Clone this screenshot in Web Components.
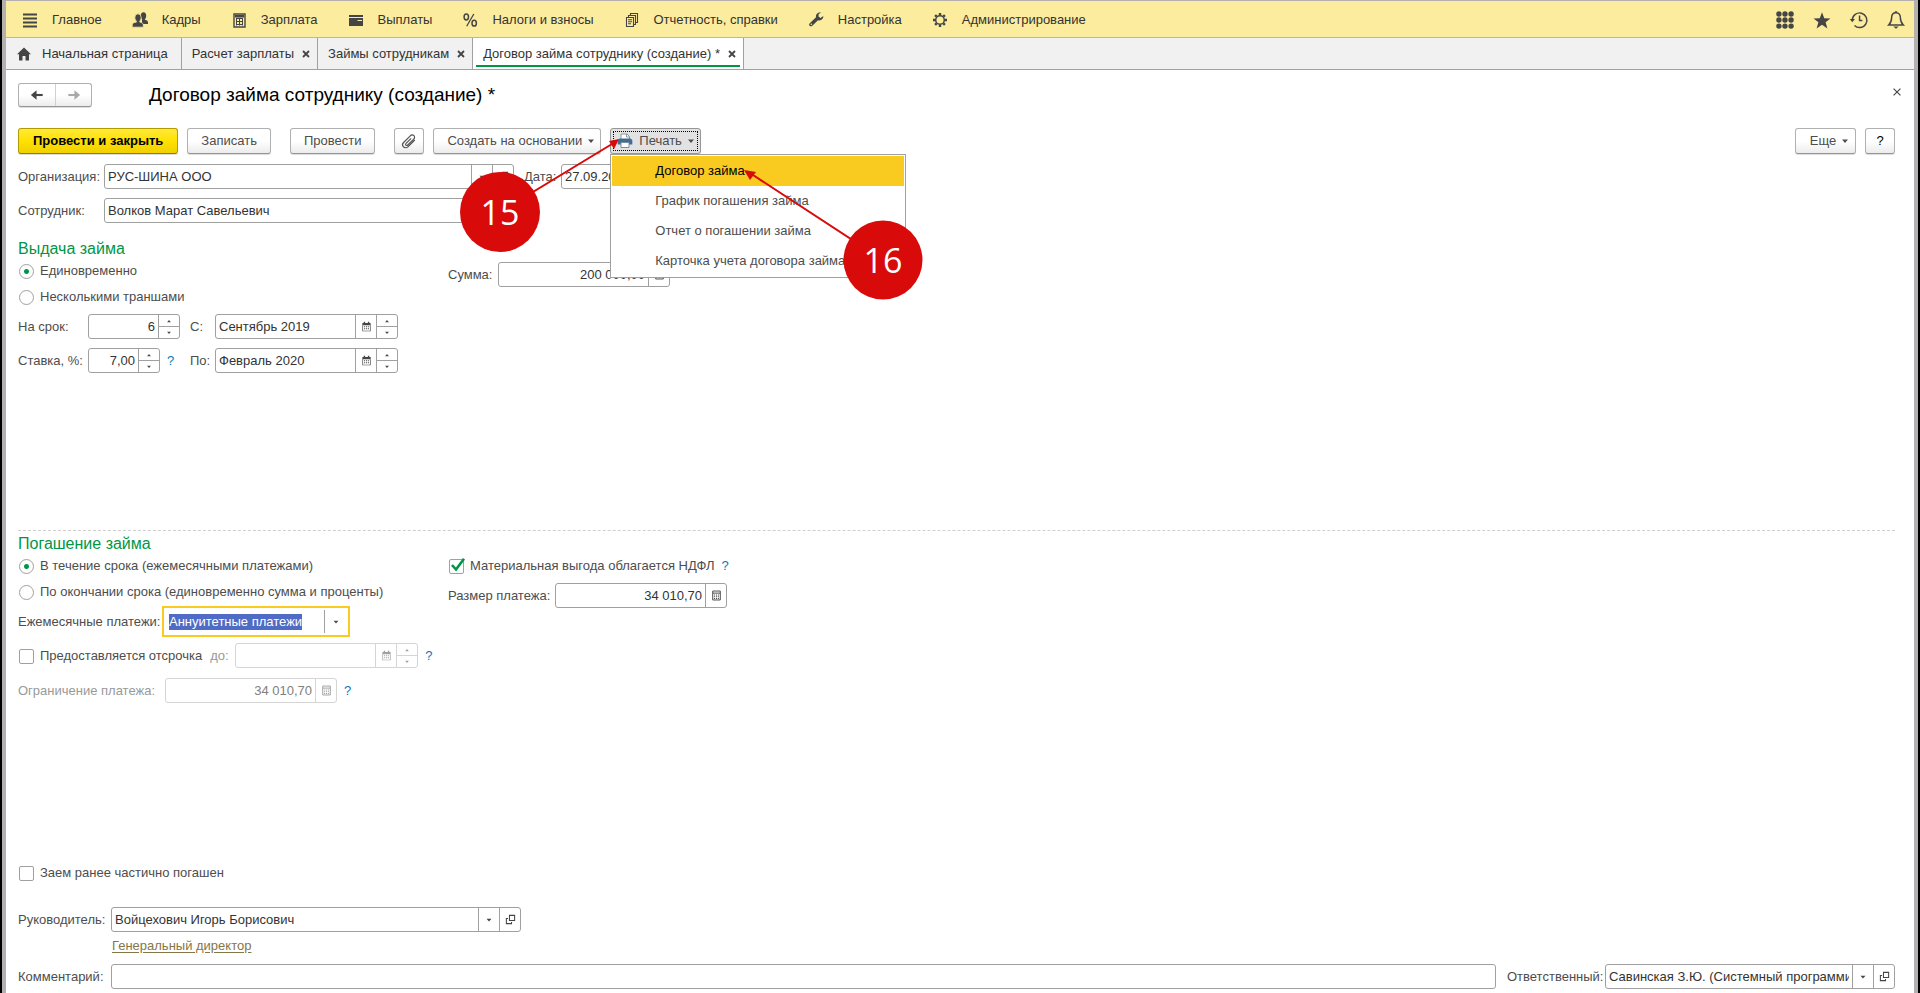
<!DOCTYPE html>
<html lang="ru">
<head>
<meta charset="utf-8">
<title>Договор займа сотруднику (создание) *</title>
<style>
  html, body { margin: 0; height: 100%; }
  body {
    font: 13px/16px "Liberation Sans", Arial, sans-serif;
    color: #4d4d4d;
    background: #fff;
  }
</style>
</head>
<body>
<loan-app></loan-app>

<script>
const ICONS = {
  menu: '<path d="M1 2.5h14M1 6.5h14M1 10.5h14M1 14.5h14" stroke="#454545" stroke-width="2" fill="none"/>',
  people: '<g fill="#454545"><ellipse cx="11.500" cy="3.800" rx="2.700" ry="3.500"/><path d="M10 6h3v1.800c2.200.5 3 1.200 3 2.700V12h-6z"/></g><g fill="#454545" stroke="#fbec9e" stroke-width=".8"><path d="M4.600 8h3v2c2.600.7 3.700 1.300 3.700 3v2.200H.2V13c0-1.700 1.100-2.300 4.400-3z"/><ellipse cx="6" cy="5.800" rx="3.200" ry="4"/></g><path d="M5 8.500h2.200V11H5z" fill="#454545"/>',
  calculator: '<path d="M3 2h11v13H3z" fill="none" stroke="#454545" stroke-width="1.400"/><path d="M4 3h9v2.500H4z" fill="#454545"/><path d="M5 6.500h7M5 9.500h7M5 12.500h7M5.500 6v7.500M8.500 6v7.500M11.500 6v7.500" stroke="#454545" stroke-width="1" fill="none"/>',
  wallet: '<path d="M1 3h14v2H1zM1 6h14v8H1z" fill="#454545"/><path d="M9.500 8.500H14" stroke="#fbec9e" stroke-width="1"/>',
  percent: '<g fill="none" stroke="#454545" stroke-width="1.500"><ellipse cx="4.300" cy="5" rx="2.200" ry="2.900"/><ellipse cx="12.200" cy="11.200" rx="2.200" ry="2.900"/><path d="M11.800 2 4.700 14.300" stroke-width="1.300"/></g>',
  report: '<g fill="none" stroke="#454545" stroke-width="1.100"><path d="M2.500 5.500h7v9h-7zM4.500 5V3.500h7v9H10M6.500 3V1.500h7v9H12"/><path d="M4 7.800h4M4 9.800h4M4 11.800h3"/></g>',
  wrench: '<path d="M15.300 4.100 12.600 5.900 10.500 4.400l.2-2.300L13.200.6C10.300 0 7.500 1.700 8 5.200L1.800 11.200c-1.900 1.800.6 4.400 2.500 2.500L10 8.300c3.100.8 5.600-1.300 5.300-4.200zM3.300 13.100a.8.8 0 1 1 0-1.600.8.8 0 0 1 0 1.600z" fill="#454545"/>',
  gear: '<g stroke="#454545" fill="none"><circle cx="8" cy="8" r="4.300" stroke-width="1.500"/><path d="M8 1v2.500M8 12.500V15M1 8h2.500M12.500 8H15M3.100 3.100l1.600 1.600M11.300 11.300l1.600 1.600M12.900 3.100l-1.600 1.600M4.700 11.300l-1.600 1.600" stroke-width="2.400"/></g>',
  home: '<path d="M8 1.500 15 8.200h-2V14.500H9.500V10h-3v4.500H3V8.200H1z" fill="#454545"/>',
  apps: '<g fill="#454545"><circle cx="2.600" cy="2.600" r="2.400"/><circle cx="8" cy="2.600" r="2.400"/><circle cx="13.400" cy="2.600" r="2.400"/><circle cx="2.600" cy="8" r="2.400"/><circle cx="8" cy="8" r="2.400"/><circle cx="13.400" cy="8" r="2.400"/><circle cx="2.600" cy="13.400" r="2.400"/><circle cx="8" cy="13.400" r="2.400"/><circle cx="13.400" cy="13.400" r="2.400"/></g>',
  star: '<path d="M8 1.200 10 6.500l5.500.1-4.300 3.500 1.600 5.400L8 12.300l-4.800 3.200 1.600-5.400L.5 6.600 6 6.500z" fill="#454545"/>',
  history: '<g fill="none" stroke="#454545" stroke-width="1.300"><path d="M2 8a6.500 6.500 0 1 1 2 4.900"/><path d="M8.500 4v4.500H11"/></g><path d="M-.2 7h4.600L2 10z" fill="#454545"/>',
  bell: '<path d="M8 1.500c-2.700 0-3.900 2-3.900 4.500 0 3.400-.8 4.700-2.600 6.500h13c-1.800-1.800-2.600-3.100-2.600-6.500 0-2.500-1.200-4.500-3.900-4.500z" fill="none" stroke="#454545" stroke-width="1.300"/><path d="M5.600 13.700h4.800L8 15.700zM7 .3h2v1.300H7z" fill="#454545"/>',
  back: '<path d="M5 8h9.500" stroke="#454545" stroke-width="2.400"/><path d="M7.500 2.700V13.300L1 8z" fill="#454545"/>',
  forward: '<path d="M1.500 8H11" stroke="#a9a9a9" stroke-width="2.400"/><path d="M8.500 2.700V13.300L15 8z" fill="#a9a9a9"/>',
  cross: '<path d="m4 4 8 8M12 4l-8 8" stroke="#454545" stroke-width="2.400"/>',
  close: '<path d="m2.500 2.500 11 11M13.500 2.500l-11 11" stroke="#444" stroke-width="1.800"/>',
  clip: '<path d="m13.200 6.600-6.600 6.600C5 14.800 2.800 14.600 1.700 13.300c-1.100-1.200-.9-3 .3-4.200l6.700-6.700c1-1 2.600-1.200 3.600-.2s.8 2.500-.2 3.500l-5.900 5.900c-.6.600-1.400.7-1.900.2s-.4-1.300.2-1.900l5-5" transform="translate(.6 .4)" fill="none" stroke="#555" stroke-width="1.200"/>',
  printer: '<path d="M4 6V1h6l2.500 2.500V6" fill="#fff" stroke="#8a98a4"/><path d="M9.500 1v3h3" fill="none" stroke="#8a98a4"/><path d="M2.500 5.500h11L15.300 7v4.500H.7V7z" fill="#3f6d95"/><path d="M4 9.500h8v5H4z" fill="#fff" stroke="#7d8c99"/>',
  calendar: '<g fill="currentColor"><path d="M2 3h12v3H2zM4 1h2v2H4zM10 1h2v2h-2z"/><path d="M2 6h1v8h10V6h1v9H2z"/><path d="M4.500 7.500H6V9H4.500zM7.300 7.500h1.500V9H7.300zM10 7.500h1.500V9H10zM4.500 10.500H6V12H4.500zM7.300 10.500h1.500V12H7.300zM10 10.500h1.500V12H10z"/></g>',
  calc: '<g fill="none" stroke="currentColor" stroke-width="1.400"><path d="M2.500 1.500h11v13h-11zM2.500 4.500h11"/></g><path d="M4.500 6.500H6V8H4.500zM7.300 6.500h1.500V8H7.300zM10 6.500h1.500V8H10zM4.500 9H6v1.500H4.500zM7.300 9h1.500v1.500H7.300zM10 9h1.500v1.500H10zM4.500 11.500H6V13H4.500zM7.300 11.500h1.500V13H7.300zM10 11.500h1.500V13H10z" fill="currentColor"/>',
  open: '<g fill="none" stroke="currentColor" stroke-width="1.500"><path d="M6.500 2h7.500v7.500H6.500z"/><path d="M4.500 6.500H2V14h7.500v-2.500"/></g>',
  drop: '<path d="M4 6h8l-4 4.500z" fill="currentColor"/>',
  up: '<path d="M5 10h6L8 6.500z" fill="currentColor"/>',
  down: '<path d="M5 6h6L8 9.500z" fill="currentColor"/>'
};

let nextId = 0;

class Base extends HTMLElement {
  connectedCallback() {
    if (this.shadowRoot) return;
    const root = this.attachShadow({ mode: 'open' });
    const t = document.createElement('template');
    t.innerHTML = '<style>*{box-sizing:border-box}button{font:inherit;color:inherit;margin:0;padding:0;border:0;background:none}' +
      this.css() + '</style>' + this.html();
    root.append(t.content.cloneNode(true));
  }
  at(name, fallback = '') { return this.getAttribute(name) ?? fallback; }
}

customElements.define('ui-icon', class extends Base {
  css() { return `:host{display:block;flex:none;width:${this.at('size', 16)}px;height:${this.at('size', 16)}px}svg{display:block;overflow:visible}`; }
  html() { return `<svg width="100%" height="100%" viewBox="0 0 16 16" aria-hidden="true">${ICONS[this.at('name')]}</svg>`; }
});

/* Yellow section bar */
customElements.define('nav-item', class extends Base {
  css() { return ':host{display:block}a{display:flex;align-items:center;gap:14px;color:#333;text-decoration:none;white-space:nowrap}'; }
  html() { return `<a href="#"><ui-icon name="${this.at('icon')}"></ui-icon><slot></slot></a>`; }
});

customElements.define('section-bar', class extends Base {
  css() { return `:host{display:flex;align-items:center;justify-content:space-between;height:37px;padding:1px 9px 0 16px;box-sizing:border-box;
      background:#fbec9e;border-bottom:1px solid #cbbb6b}
    nav{display:flex;gap:30px}.tools{display:flex;gap:19px}`; }
  html() { return `<nav>
      <nav-item icon="menu">Главное</nav-item>
      <nav-item icon="people">Кадры</nav-item>
      <nav-item icon="calculator">Зарплата</nav-item>
      <nav-item icon="wallet">Выплаты</nav-item>
      <nav-item icon="percent">Налоги и взносы</nav-item>
      <nav-item icon="report">Отчетность, справки</nav-item>
      <nav-item icon="wrench">Настройка</nav-item>
      <nav-item icon="gear">Администрирование</nav-item>
    </nav>
    <div class="tools">
      <button aria-label="Все функции"><ui-icon name="apps" size="18"></ui-icon></button>
      <button aria-label="Избранное"><ui-icon name="star" size="18"></ui-icon></button>
      <button aria-label="История"><ui-icon name="history" size="18"></ui-icon></button>
      <button aria-label="Оповещения"><ui-icon name="bell" size="18"></ui-icon></button>
    </div>`; }
});

/* Open windows */
customElements.define('window-tab', class extends Base {
  css() { return `:host{display:flex;align-items:center;position:relative;padding:0 5px 0 10px;border-right:1px solid #a0a0a0;color:#333;white-space:nowrap}
    :host([home]){padding-right:13px}
    :host([active]){background:#fff}
    :host([active])::after{content:"";position:absolute;left:3px;right:3px;bottom:2px;height:2px;background:#009646}
    a{display:flex;align-items:center;gap:10px;color:inherit;text-decoration:none}
    button{margin-left:6px}`; }
  html() {
    const home = this.hasAttribute('home');
    return `<a href="#">${home ? '<ui-icon name="home"></ui-icon>' : ''}<slot></slot></a>` +
      (home ? '' : '<button aria-label="Закрыть вкладку"><ui-icon name="cross" size="12"></ui-icon></button>');
  }
});

customElements.define('window-tabs', class extends Base {
  css() { return ':host{display:flex;height:32px;box-sizing:border-box;background:#f1f1f1;border-bottom:1px solid #a0a0a0}'; }
  html() { return `<window-tab home>Начальная страница</window-tab>
    <window-tab>Расчет зарплаты</window-tab>
    <window-tab>Займы сотрудникам</window-tab>
    <window-tab active>Договор займа сотруднику (создание) *</window-tab>`; }
});

/* Command button */
customElements.define('cmd-button', class extends Base {
  css() { return `:host{display:block;flex:none}
    button{display:flex;align-items:center;justify-content:center;height:26px;min-width:30px;padding:0 13px;white-space:nowrap;
      border:1px solid #b0b0b0;border-bottom-color:#969696;border-radius:3px;background:linear-gradient(#fff 50%,#ececec);box-shadow:0 1px 0 #ddd}
    :host([kind=primary]) button{padding:0 14px;font-weight:bold;color:#000;border-color:#b39c00;border-bottom-color:#8f7d00;background:linear-gradient(#ffe93b,#ffe100 50%,#f0d000)}
    :host([kind=icon]) button{padding:0 6px;color:#000}
    :host([menu]) button{min-width:61px;padding-right:3px}
    :host([pressed]) button{padding:0 3px 0 6px;background:#e2e2e2;border-color:#979797;outline:1px dotted #000;outline-offset:-4px}
    :host([pressed]) ui-icon:first-child{margin-right:6px}
    .drop{margin-left:3px}`; }
  html() {
    const icon = this.at('icon');
    return `<button ${this.hasAttribute('menu') ? 'aria-haspopup="menu"' : ''} ${this.at('hint') ? `aria-label="${this.at('hint')}"` : ''}>` +
      (icon ? `<ui-icon name="${icon}"></ui-icon>` : '') + '<slot></slot>' +
      (this.hasAttribute('menu') ? '<ui-icon class="drop" name="drop" size="12"></ui-icon>' : '') + '</button>';
  }
});

customElements.define('print-menu', class extends Base {
  css() { return `:host{display:block;position:relative}
    [role=menu]{position:absolute;z-index:2;top:26px;left:0;width:296px;box-sizing:border-box;padding:1px;background:#fff;border:1px solid #a0a0a0}
    [role=menuitem]{display:block;width:100%;height:30px;padding-left:43px;text-align:left;white-space:nowrap}
    .current{background:#f9cb20;color:#000}`; }
  html() { return `<cmd-button icon="printer" menu pressed>Печать</cmd-button>
    <div role="menu">
      <button role="menuitem" class="current">Договор займа</button>
      <button role="menuitem">График погашения займа</button>
      <button role="menuitem">Отчет о погашении займа</button>
      <button role="menuitem">Карточка учета договора займа</button>
    </div>`; }
});

/* Labelled input with optional trailing buttons */
customElements.define('form-field', class extends Base {
  css() { return `:host{display:flex;align-items:center;height:25px}
    :host([grow]){flex:1}
    :host([disabled]) label{color:#999}
    label{flex:none;width:${this.at('label-width') ? this.at('label-width') + 'px' : 'auto'};white-space:nowrap}
    .box{display:flex;height:25px;flex:${this.hasAttribute('grow') ? '1' : 'none'};width:${this.at('width', 100)}px;
      border:1px solid #a0a0a0;border-radius:3px;background:#fff;color:#454545}
    :host([disabled]) .box{border-color:#d5d5d5;color:#a0a0a0}
    input{flex:1;min-width:0;font:inherit;color:#333;border:0;outline:0;margin:0;padding:0 3px;background:none;text-align:${this.hasAttribute('numeric') ? 'right' : 'left'}}
    :host([disabled]) input{color:#808080}
    .box>button,.spin{flex:none;width:21px;border-left:1px solid #a0a0a0;display:flex;align-items:center;justify-content:center}
    .spin{flex-direction:column}
    .spin button{flex:1;width:100%;display:flex;align-items:center;justify-content:center}
    .spin button+button{border-top:1px solid #a0a0a0}
    :host([disabled]) .box>button,:host([disabled]) .spin,:host([disabled]) .spin button{border-color:#d5d5d5}
    .help{margin-left:7px;color:#0a78c2}`; }
  html() {
    const id = 'f' + (++nextId), off = this.hasAttribute('disabled') ? 'disabled' : '';
    const names = { drop: 'Выбрать из списка', open: 'Открыть', calendar: 'Календарь', calc: 'Калькулятор' };
    const buttons = this.at('buttons').split(' ').filter(Boolean).map(b => b === 'spin'
      ? `<span class="spin"><button aria-label="Больше" ${off}><ui-icon name="up" size="10"></ui-icon></button><button aria-label="Меньше" ${off}><ui-icon name="down" size="10"></ui-icon></button></span>`
      : `<button aria-label="${names[b]}" ${off}><ui-icon name="${b}" size="${b === 'drop' ? 10 : 11}"></ui-icon></button>`).join('');
    return `<label for="${id}">${this.at('label')}</label><span class="box"><input id="${id}" type="text" value="${this.at('value')}" ${off}>${buttons}</span>` +
      (this.hasAttribute('help') ? '<button class="help" aria-label="Справка">?</button>' : '');
  }
});

/* Focused drop-down with its value highlighted */
customElements.define('choice-field', class extends Base {
  css() { return `:host{display:flex;align-items:center;height:31px}
    label{flex:none;width:144px;white-space:nowrap}
    .box{display:flex;align-items:center;width:188px;height:31px;padding:0 2px 0 5px;border:2px solid #f9cb20}
    select{appearance:none;field-sizing:content;font:inherit;height:16px;margin:0 auto 0 0;padding:0;border:0;border-radius:0;outline:0;background:#4f6bc5;color:#fff}
    button{width:22px;height:23px;border-left:1px solid #a0a0a0;display:flex;align-items:center;justify-content:center}`; }
  html() { return `<label for="c">${this.at('label')}</label><span class="box"><select id="c"><option>${this.at('value')}</option></select>
      <button aria-label="Выбрать из списка"><ui-icon name="drop" size="10"></ui-icon></button></span>`; }
});

/* Radio buttons and tick boxes */
customElements.define('check-field', class extends Base {
  css() { return `:host{display:flex;align-items:center;height:26px;padding-left:1px}
    label{display:flex;align-items:center;gap:6px;white-space:nowrap}
    input{appearance:none;flex:none;width:15px;height:15px;margin:0;border:1px solid #a0a0a0;border-radius:2px;background:#fff}
    input[type=radio]{border-radius:50%}
    input[type=radio]:checked{background:radial-gradient(circle,#009646 2px,#fff 3px)}
    .mark{position:relative;display:flex}
    svg{position:absolute;left:1px;top:-1px;overflow:visible;pointer-events:none}
    .help{margin-left:7px;color:#0a78c2}`; }
  html() {
    const on = this.hasAttribute('checked'), type = this.at('type', 'checkbox');
    return `<label><span class="mark"><input type="${type}" ${on ? 'checked' : ''}>` +
      (on && type === 'checkbox' ? '<svg width="15" height="14" viewBox="0 0 15 14"><path d="M2 7l4 4.500L14 .8" fill="none" stroke="#009646" stroke-width="2.600"/></svg>' : '') +
      '</span><slot></slot></label>' + (this.hasAttribute('help') ? '<button class="help" aria-label="Справка">?</button>' : '');
  }
});

/* Numbered callouts drawn over the form */
customElements.define('step-callouts', class extends Base {
  css() { return ':host{position:absolute;z-index:3;left:448px;top:119px;pointer-events:none}svg{display:block}text{font:34px "Open Sans","Noto Sans",sans-serif;fill:#fff;text-anchor:middle}'; }
  html() { return `<svg width="474" height="184" viewBox="454 120 474 184">
      <g stroke="#d90a0a" stroke-width="2"><path d="M500 212 612 144M883 260 753 175"/></g>
      <g fill="#d90a0a"><path d="M619 139 614 149 609 141zM744 170l12 2-6 8z"/>
      <circle cx="500" cy="212" r="40"/><circle cx="883" cy="260" r="39.500"/></g>
      <text x="500" y="225">15</text><text x="883" y="273">16</text></svg>`; }
});

customElements.define('loan-form', class extends Base {
  css() { return `:host{flex:1;display:flex;flex-direction:column;padding:12px 19px 4px 12px}
    header{display:flex;align-items:center;height:26px}
    .history{display:flex;height:24px;border:1px solid #b0b0b0;border-bottom-color:#969696;border-radius:3px;background:linear-gradient(#fff 50%,#ececec);box-shadow:0 1px 0 #ddd}
    .history button{display:flex;align-items:center;justify-content:center;width:36px}
    .history button+button{border-left:1px solid #d0d0d0}
    h1{margin:0 auto 0 57px;font-size:19px;line-height:24px;font-weight:normal;color:#000}
    .close{align-self:flex-start;margin:5px -7px 0 0}
    .toolbar{display:flex;margin-top:20px;gap:9px}
    .wide{margin-left:10px}.end{margin-left:auto}
    .row{display:flex;gap:10px;margin-top:10px}
    .row+.row{margin-top:9px}
    h2{margin:0;font-size:16px;line-height:18px;font-weight:normal;color:#009646}
    .issue{margin-top:17px}
    .columns{display:grid;grid-template-columns:430px 1fr;align-items:start}
    .spacer{flex:1}
    .period{display:grid;grid-template-columns:172px auto;gap:9px 0;justify-content:start;margin-top:4px}
    .repay{border-top:1px dashed #cfcfcf;padding-top:4px}
    .choice{margin-top:1px}
    .delay{display:flex;gap:8px;margin-top:6px}
    .limit{margin-top:9px}
    .right{padding-top:4px}
    .link{display:block;width:max-content;margin:5px 0 9px 94px;line-height:18px;color:#857648;text-underline-offset:2px}
    .manager{margin-top:21px}
    footer{display:flex;gap:11px}`; }
  html() { return `<header>
      <div class="history"><button aria-label="Назад"><ui-icon name="back" size="14"></ui-icon></button><button aria-label="Вперед" disabled><ui-icon name="forward" size="14"></ui-icon></button></div>
      <h1>Договор займа сотруднику (создание) *</h1>
      <button class="close" aria-label="Закрыть"><ui-icon name="close" size="10"></ui-icon></button>
    </header>
    <div class="toolbar">
      <cmd-button kind="primary">Провести и закрыть</cmd-button>
      <cmd-button>Записать</cmd-button>
      <cmd-button class="wide">Провести</cmd-button>
      <cmd-button class="wide" kind="icon" icon="clip" hint="Присоединенные файлы"></cmd-button>
      <cmd-button menu>Создать на основании</cmd-button>
      <print-menu></print-menu>
      <cmd-button class="end" menu>Еще</cmd-button>
      <cmd-button kind="icon">?</cmd-button>
    </div>
    <div class="row">
      <form-field label="Организация:" label-width="86" width="410" value="РУС-ШИНА ООО" buttons="drop open"></form-field>
      <form-field label="Дата:" label-width="37" width="140" value="27.09.2019 12:00:00" buttons="calendar"></form-field>
    </div>
    <div class="row">
      <form-field label="Сотрудник:" label-width="86" width="410" value="Волков Марат Савельевич" buttons="drop open"></form-field>
    </div>
    <section class="issue">
      <h2>Выдача займа</h2>
      <div class="columns">
        <div>
          <check-field type="radio" checked>Единовременно</check-field>
          <check-field type="radio">Несколькими траншами</check-field>
          <div class="period">
            <form-field label="На срок:" label-width="70" width="92" numeric value="6" buttons="spin"></form-field>
            <form-field label="С:" label-width="25" width="183" value="Сентябрь 2019" buttons="calendar spin"></form-field>
            <form-field label="Ставка, %:" label-width="70" width="72" numeric value="7,00" buttons="spin" help></form-field>
            <form-field label="По:" label-width="25" width="183" value="Февраль 2020" buttons="calendar spin"></form-field>
          </div>
        </div>
        <div class="right">
          <form-field label="Сумма:" label-width="50" width="172" numeric value="200 000,00" buttons="calc"></form-field>
        </div>
      </div>
    </section>
    <div class="spacer"></div>
    <section class="repay">
      <h2>Погашение займа</h2>
      <div class="columns">
        <div>
          <check-field type="radio" checked>В течение срока (ежемесячными платежами)</check-field>
          <check-field type="radio">По окончании срока (единовременно сумма и проценты)</check-field>
          <choice-field class="choice" label="Ежемесячные платежи:" value="Аннуитетные платежи"></choice-field>
          <div class="delay">
            <check-field>Предоставляется отсрочка</check-field>
            <form-field label="до:" label-width="25" width="183" disabled buttons="calendar spin" help></form-field>
          </div>
          <form-field class="limit" label="Ограничение платежа:" label-width="147" width="172" numeric value="34 010,70" disabled buttons="calc" help></form-field>
        </div>
        <div>
          <check-field checked help>Материальная выгода облагается НДФЛ</check-field>
          <div class="right"><form-field label="Размер платежа:" label-width="107" width="172" numeric value="34 010,70" buttons="calc"></form-field></div>
        </div>
      </div>
    </section>
    <div class="spacer"></div>
    <check-field>Заем ранее частично погашен</check-field>
    <form-field class="manager" label="Руководитель:" label-width="93" width="410" value="Войцехович Игорь Борисович" buttons="drop open"></form-field>
    <a class="link" href="#">Генеральный директор</a>
    <footer>
      <form-field grow label="Комментарий:" label-width="93"></form-field>
      <form-field label="Ответственный:" label-width="98" width="290" value="Савинская З.Ю. (Системный программист)" buttons="drop open"></form-field>
    </footer>`; }
});

customElements.define('loan-app', class extends Base {
  css() { return `:host{position:relative;display:flex;flex-direction:column;min-height:100vh;box-sizing:border-box;
      border:solid #b4b0b0;border-width:1px 4px 0;outline:2px solid #000;outline-offset:0;margin:0 2px;clip-path:inset(0 -2px)}`; }
  html() { return '<section-bar></section-bar><window-tabs></window-tabs><loan-form></loan-form><step-callouts></step-callouts>'; }
});
</script>
</body>
</html>
